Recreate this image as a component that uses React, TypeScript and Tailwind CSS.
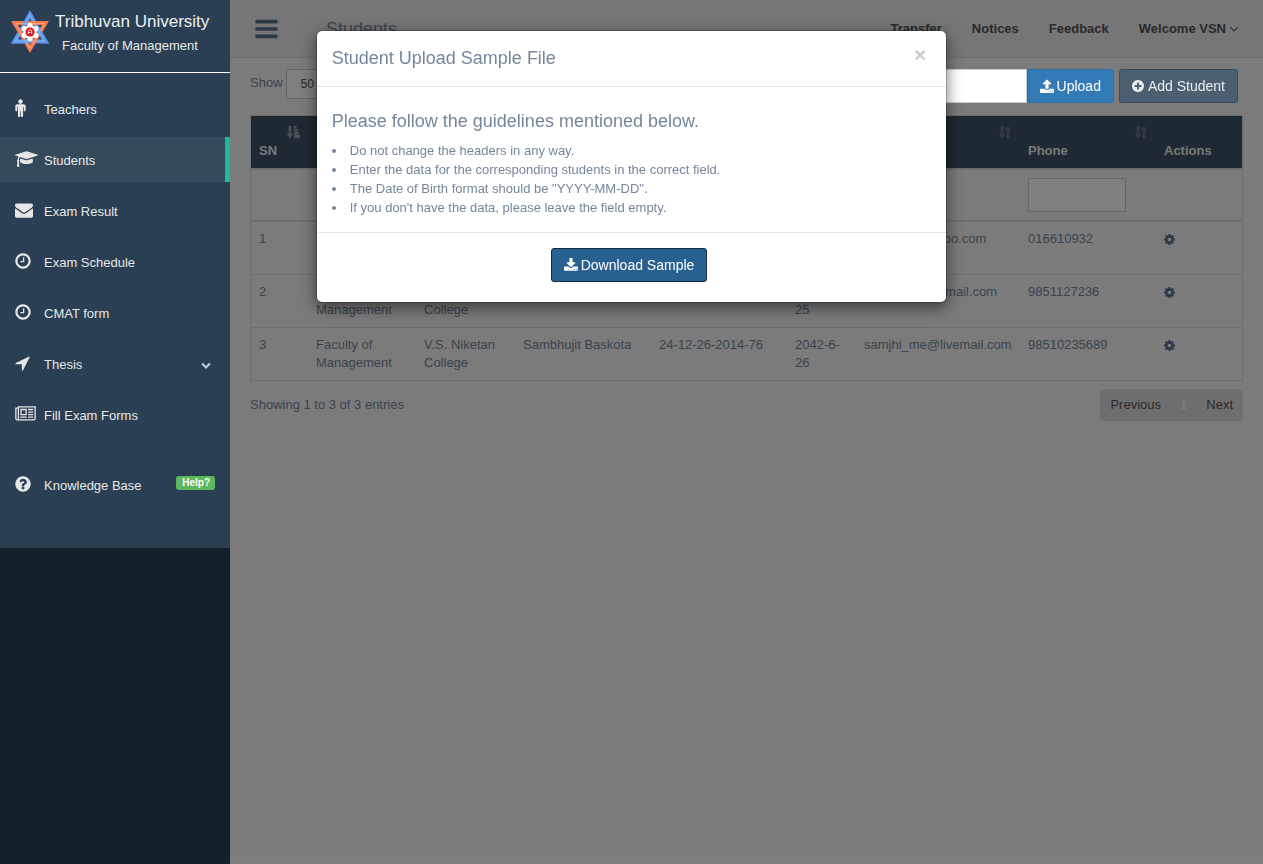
import React from 'react';

type IconProps = { path: string; viewBox?: string; className?: string };

function Icon({ path, viewBox = '0 0 1792 1792', className = '' }: IconProps) {
    return (
        <svg viewBox={viewBox} fill="currentColor" aria-hidden="true" className={className}>
            <path d={path} />
        </svg>
    );
}

const CIRCLE = 'q0 209-103 385.5t-279.5 279.5-385.5 103-385.5-103-279.5-279.5-103-385.5 103-385.5 279.5-279.5 385.5-103 385.5 103 279.5 279.5 103 385.5z';

const icons = {
    bars: 'M1664 1344v128q0 26-19 45t-45 19h-1408q-26 0-45-19t-19-45v-128q0-26 19-45t45-19h1408q26 0 45 19t19 45zm0-512v128q0 26-19 45t-45 19h-1408q-26 0-45-19t-19-45v-128q0-26 19-45t45-19h1408q26 0 45 19t19 45zm0-512v128q0 26-19 45t-45 19h-1408q-26 0-45-19t-19-45v-128q0-26 19-45t45-19h1408q26 0 45 19t19 45z',
    male: 'M1408 704v416q0 40-28 68t-68 28-68-28-28-68v-352h-64v912q0 46-33 79t-79 33-79-33-33-79v-464h-64v464q0 46-33 79t-79 33-79-33-33-79v-912h-64v352q0 40-28 68t-68 28-68-28-28-68v-416q0-80 56-136t136-56h640q80 0 136 56t56 136zm-288-448q0 93-65.5 158.5t-158.5 65.5-158.5-65.5-65.5-158.5 65.5-158.5 158.5-65.5 158.5 65.5 65.5 158.5z',
    cap: 'M1774 836l18 316q4 69-82 128t-235 93.5-323 34.5-323-34.5-235-93.5-82-128l18-316 574 181q22 7 48 7t48-7zm530-324q0 23-22 31l-1120 352q-4 1-10 1t-10-1l-652-206q-43 34-71 111.5t-34 178.5q63 36 63 109 0 69-58 107l58 433q2 14-8 25-9 11-24 11h-192q-15 0-24-11-10-11-8-25l58-433q-58-38-58-107 0-73 65-111 11-207 98-330l-333-104q-22-8-22-31t22-31l1120-352q4-1 10-1t10 1l1120 352q22 8 22 31z',
    envelope: 'M1792 710v794q0 66-47 113t-113 47h-1472q-66 0-113-47t-47-113v-794q44 49 101 87 362 246 497 345 57 42 92.5 65.5t94.5 48 110 24.5h2q51 0 110-24.5t94.5-48 92.5-65.5q170-123 498-345 57-39 100-87zm0-294q0 79-49 151t-122 123q-376 261-468 325-10 7-42.5 31t-54 38.5-52 32.5-57.5 27-50 9h-2q-23 0-50-9t-57.5-27-52-32.5-54-38.5-42.5-31q-91-64-262-182.5t-205-142.5q-62-42-117-115.5t-55-136.5q0-78 41.5-130t118.5-52h1472q65 0 112.5 47t47.5 113z',
    clock: 'M1024 544v448q0 14-9 23t-23 9h-320q-14 0-23-9t-9-23v-64q0-14 9-23t23-9h224v-352q0-14 9-23t23-9h64q14 0 23 9t9 23zm416 352q0-148-73-273t-198-198-273-73-273 73-198 198-73 273 73 273 198 198 273 73 273-73 198-198 73-273zm224 0' + CIRCLE,
    arrow: 'M1593 349l-640 1280q-17 35-57 35-5 0-15-2-22-5-35.5-22.5t-13.5-39.5v-576h-576q-22 0-39.5-13.5t-22.5-35.5 4-42 29-30l1280-640q13-7 29-7 27 0 45 19 15 14 18.5 34.5t-6.5 39.5z',
    newspaper: 'M1024 512h-384v384h384v-384zm128 640v128h-640v-128h640zm0-768v640h-640v-640h640zm640 768v128h-512v-128h512zm0-256v128h-512v-128h512zm0-256v128h-512v-128h512zm0-256v128h-512v-128h512zm-1536 960v-960h-128v960q0 26 19 45t45 19 45-19 19-45zm1664 0v-1088h-1536v1088q0 33-11 64h1483q26 0 45-19t19-45zm128-1216v1216q0 80-56 136t-136 56h-1664q-80 0-136-56t-56-136v-1088h256v-128h1792z',
    question: 'M1024 1376v-192q0-14-9-23t-23-9h-192q-14 0-23 9t-9 23v192q0 14 9 23t23 9h192q14 0 23-9t9-23zm256-672q0-88-55.5-163t-138.5-116-170-41q-243 0-371 213-15 24 8 42l132 100q7 6 19 6 16 0 25-12 53-68 86-92 34-24 86-24 48 0 85.5 26t37.5 59q0 38-20 61t-68 45q-63 28-115.5 86.5t-52.5 125.5v36q0 14 9 23t23 9h192q14 0 23-9t9-23q0-19 21.5-49.5t54.5-49.5q32-18 49-28.5t46-35 44.5-48 28-60.5 12.5-81zm384 192' + CIRCLE,
    plus: 'M1344 960v-128q0-26-19-45t-45-19h-256v-256q0-26-19-45t-45-19h-128q-26 0-45 19t-19 45v256h-256q-26 0-45 19t-19 45v128q0 26 19 45t45 19h256v256q0 26 19 45t45 19h128q26 0 45-19t19-45v-256h256q26 0 45-19t19-45zm320-64' + CIRCLE,
    cog: 'M1152 896q0-106-75-181t-181-75-181 75-75 181 75 181 181 75 181-75 75-181zm512-109v222q0 12-8 23t-20 13l-185 28q-19 54-39 91 35 50 107 138 10 12 10 25t-9 23q-27 37-99 108t-94 71q-12 0-26-9l-138-108q-44 23-91 38-16 136-29 186-7 28-36 28h-222q-14 0-24.5-8.5t-11.5-21.5l-28-184q-49-16-90-37l-141 107q-10 9-25 9-14 0-25-11-126-114-165-168-7-10-7-23 0-12 8-23 15-21 51-66.5t54-70.5q-27-50-41-99l-183-27q-13-2-21-12.5t-8-23.5v-222q0-12 8-23t19-13l186-28q14-46 39-92-40-57-107-138-10-12-10-24 0-10 9-23 26-36 98.5-107.5t94.5-71.5q13 0 26 10l138 107q44-23 91-38 16-136 29-186 7-28 36-28h222q14 0 24.5 8.5t11.5 21.5l28 184q49 16 90 37l142-107q9-9 24-9 13 0 25 10 129 119 165 170 7 8 7 22 0 12-8 23-15 21-51 66.5t-54 70.5q26 50 41 98l183 28q13 2 21 12.5t8 23.5z',
    upload: 'M1344 1472q0-26-19-45t-45-19-45 19-19 45 19 45 45 19 45-19 19-45zm256 0q0-26-19-45t-45-19-45 19-19 45 19 45 45 19 45-19 19-45zm128-224v320q0 40-28 68t-68 28h-1472q-40 0-68-28t-28-68v-320q0-40 28-68t68-28h427q21 56 70.5 92t110.5 36h256q61 0 110.5-36t70.5-92h427q40 0 68 28t28 68zm-325-648q-17 40-59 40h-256v448q0 26-19 45t-45 19h-256q-26 0-45-19t-19-45v-448h-256q-42 0-59-40-17-39 14-69l448-448q18-19 45-19t45 19l448 448q31 30 14 69z',
    download: 'M1344 1344q0-26-19-45t-45-19-45 19-19 45 19 45 45 19 45-19 19-45zm256 0q0-26-19-45t-45-19-45 19-19 45 19 45 45 19 45-19 19-45zm128-224v320q0 40-28 68t-68 28h-1472q-40 0-68-28t-28-68v-320q0-40 28-68t68-28h465l135 136q58 56 136 56t136-56l136-136h464q40 0 68 28t28 68zm-325-569q17 41-14 70l-448 448q-18 19-45 19t-45-19l-448-448q-31-29-14-70 17-39 59-39h256v-448q0-26 19-45t45-19h256q26 0 45 19t19 45v448h256q42 0 59 39z',
    chevronDown: 'M1683 808l-742 741q-19 19-45 19t-45-19l-742-741q-19-19-19-45.5t19-45.5l166-165q19-19 45-19t45 19l531 531 531-531q19-19 45-19t45 19l166 165q19 19 19 45.5t-19 45.5z',
    angleDown: 'M1395 736q0 13-10 23l-466 466q-10 10-23 10t-23-10l-466-466q-10-10-10-23t10-23l50-50q10-10 23-10t23 10l393 393 393-393q10-10 23-10t23 10l50 50q10 10 10 23z',
    sort: 'M3 1h3v9h2.500l-4 5l-4-5h2.500zM10 15v-9h-2.500l4-5l4 5h-2.500v9z',
    sortAsc: 'M3 1h3v9h2.500l-4 5l-4-5h2.500zM9 1h3v3h-3zM9 4.500h4.500v3h-4.500zM9 8h5.500v3h-5.500zM9 11.500h7v3.500h-7z',
};

const menu = [
    { label: 'Teachers', icon: icons.male, viewBox: '384 0 1024 1792', size: 'w-[11px]' },
    { label: 'Students', icon: icons.cap, viewBox: '0 0 2304 1792', size: 'w-[23px]', active: true },
    { label: 'Exam Result', icon: icons.envelope, viewBox: '0 0 1792 1792', size: 'w-[18px]' },
    { label: 'Exam Schedule', icon: icons.clock, viewBox: '128 0 1536 1792', size: 'w-4' },
    { label: 'CMAT form', icon: icons.clock, viewBox: '128 0 1536 1792', size: 'w-4' },
    { label: 'Thesis', icon: icons.arrow, viewBox: '192 0 1408 1792', size: 'w-[15px]', open: true },
    { label: 'Fill Exam Forms', icon: icons.newspaper, viewBox: '0 0 2048 1792', size: 'w-[21px]' },
];

const columns = [
    { name: 'sn', label: 'SN', width: 'w-[57px]', icon: icons.sortAsc },
    { name: 'faculty', width: 'w-[108px]', icon: icons.sort },
    { name: 'college', width: 'w-[99px]', icon: icons.sort },
    { name: 'student', width: 'w-[136px]', icon: icons.sort },
    { name: 'registration', width: 'w-[136px]', icon: icons.sort },
    { name: 'birth date', width: 'w-[69px]', icon: icons.sort },
    { name: 'email', width: 'w-[164px]', icon: icons.sort },
    { name: 'phone', label: 'Phone', width: 'w-[136px]', icon: icons.sort },
    { name: 'actions', label: 'Actions', width: '' },
];

const students = [
    ['1', 'Faculty of Management', 'V.S. Niketan College', 'Sambhujit Baskota', '24-12-26-2014-74', '2042-6-24', 'vsndept@yahoo.com', '016610932'],
    ['2', 'Faculty of Management', 'V.S. Niketan College', 'Sambhujit Baskota', '24-12-26-2014-75', '2042-6-25', 'samjhi.b@livemail.com', '9851127236'],
    ['3', 'Faculty of Management', 'V.S. Niketan College', 'Sambhujit Baskota', '24-12-26-2014-76', '2042-6-26', 'samjhi_me@livemail.com', '98510235689'],
];

const guidelines = [
    'Do not change the headers in any way.',
    'Enter the data for the corresponding students in the correct field.',
    'The Date of Birth format should be "YYYY-MM-DD".',
    "If you don't have the data, please leave the field empty.",
];

function Logo() {
    return (
        <svg viewBox="0 0 38 44" className="h-[44px] w-[38px] shrink-0" aria-hidden="true">
            <g fill="none" strokeWidth="4">
                <path d="M19 4.500L34.500 31.500H3.500Z" stroke="#5a96f0" />
                <path d="M19 39L3.500 13H34.500Z" stroke="#f5794a" />
                <path d="M13 15L19 4.500L22 10M7.500 24.500L3.500 31.500H16M28 20.500L34.500 31.500H30" stroke="#5a96f0" />
            </g>
            <path d="M19 5L33.500 31H4.500Z M19 38.500L4.500 13.500H33.500Z" fill="none" stroke="#fff" strokeOpacity="0.4" strokeWidth="0.7" />
            <g fill="#fff">
                <circle cx="19" cy="22" r="7" />
                <circle cx="19" cy="15.500" r="2.800" />
                <circle cx="19" cy="28.500" r="2.800" />
                <circle cx="13.300" cy="18.700" r="2.800" />
                <circle cx="24.700" cy="18.700" r="2.800" />
                <circle cx="13.300" cy="25.300" r="2.800" />
                <circle cx="24.700" cy="25.300" r="2.800" />
            </g>
            <circle cx="19" cy="22" r="4.500" fill="#e3121b" />
            <path d="M17.300 24V21.500a1.700 1.700 0 0 1 3.400 0V24M17.300 22.500h2" fill="none" stroke="#fff" strokeWidth="0.900" />
        </svg>
    );
}

function Sidebar() {
    return (
        <aside className="relative z-30 w-[230px] shrink-0 self-start bg-[#2a3f54] pb-[41px] text-[13px] text-[#e7e7e7]">
            <div className="flex h-[73px] items-start gap-[6px] border-b border-white pl-[11px] pt-[10px]">
                <Logo />
                <div>
                    <div className="text-[17px] leading-6 text-[#ecf0f1]">Tribhuvan University</div>
                    <div className="pl-[7px] leading-6">Faculty of Management</div>
                </div>
            </div>
            <nav className="flex flex-col gap-[6px] pt-[13px]">
                {menu.map((item) => (
                    <a
                        key={item.label}
                        href="#"
                        className={`flex h-[45px] items-center pl-[15px] pt-[2px] ${item.active ? 'border-r-[5px] border-[#1abb9c] bg-[#35495d]' : ''}`}
                    >
                        <span className="w-[29px] pb-[3px]">
                            <Icon path={item.icon} viewBox={item.viewBox} className={`h-[18px] ${item.size}`} />
                        </span>
                        {item.label}
                        {item.open && <Icon path={icons.chevronDown} className="ml-auto mr-[19px] h-[10px] w-[10px] text-[#c4cfda]" />}
                    </a>
                ))}
                <a href="#" className="mt-[19px] flex h-[45px] items-center px-[15px] pt-[2px]">
                    <span className="w-[29px] pb-[3px]">
                        <Icon path={icons.question} viewBox="128 0 1536 1792" className="h-[18px] w-4" />
                    </span>
                    Knowledge Base
                    <span className="mb-[6px] ml-auto rounded-[3px] bg-[#5cb85c] pl-[6px] pr-[5px] text-[10px] font-bold leading-[14px] text-white">Help?</span>
                </a>
            </nav>
        </aside>
    );
}

function StudentsTable() {
    return (
        <table className="mt-3 w-full table-fixed border-separate border-spacing-0 border border-[#ddd]">
            <thead>
                <tr>
                    {columns.map((col) => (
                        <th
                            key={col.name}
                            aria-label={col.name}
                            className={`h-[54px] border-b-2 border-[#ddd] bg-[#3f5367] px-2 pb-2 text-left align-bottom font-bold leading-[18px] text-[#ecf0f1] ${col.width}`}
                        >
                            {col.icon && (
                                <Icon
                                    path={col.icon}
                                    viewBox="0 0 16 16"
                                    className={`mb-[3px] ml-auto h-[14px] w-[14px] ${col.name === 'sn' ? 'text-[#94a0ac]' : 'text-[#66778a]'}`}
                                />
                            )}
                            {col.label ?? <>&nbsp;</>}
                        </th>
                    ))}
                </tr>
                <tr>
                    {columns.map((col) => (
                        <td key={col.name} className="h-[52px] border-b-2 border-[#ddd] px-2 py-2">
                            {col.name === 'phone' && <input type="text" aria-label="Filter by phone" className="block h-[34px] w-[98px] border border-[#ccc] bg-white px-3" />}
                        </td>
                    ))}
                </tr>
            </thead>
            <tbody>
                {students.map((row, i) => (
                    <tr key={row[0]} className="align-top leading-[18px]">
                        {row.map((cell, j) => (
                            <td key={j} className={`h-[52px] p-2 ${i < students.length - 1 ? 'border-b border-[#ddd]' : ''}`}>{cell}</td>
                        ))}
                        <td className={`p-2 ${i < students.length - 1 ? 'border-b border-[#ddd]' : ''}`}>
                            <button type="button" aria-label="Student actions" className="block pt-1 text-[#5a738e]">
                                <Icon path={icons.cog} viewBox="128 128 1536 1536" className="h-[11px] w-[11px]" />
                            </button>
                        </td>
                    </tr>
                ))}
            </tbody>
        </table>
    );
}

function UploadModal() {
    return (
        <div className="fixed inset-0 z-40">
            <div role="dialog" aria-labelledby="upload-title" className="mx-auto mt-[30px] w-1/2 rounded-md border border-black/20 bg-white bg-clip-padding shadow-[0_5px_15px_rgba(0,0,0,0.5)]">
                <div className="flex items-start justify-between border-b border-[#e5e5e5] p-[15px]">
                    <h4 id="upload-title" className="text-[18px] leading-[25px]">Student Upload Sample File</h4>
                    <button type="button" aria-label="Close" className="mr-[5px] text-[21px] font-bold leading-[18px] text-[#ccc]">&times;</button>
                </div>
                <div className="px-[15px] pb-[15px] pt-6">
                    <h4 className="mb-[10px] text-[18px] leading-5">Please follow the guidelines mentioned below.</h4>
                    <ul className="leading-[19px]">
                        {guidelines.map((text) => (
                            <li key={text} className="flex items-center gap-[14px] before:h-1 before:w-1 before:shrink-0 before:rounded-full before:bg-[#73879c]">
                                {text}
                            </li>
                        ))}
                    </ul>
                </div>
                <div className="flex justify-center border-t border-[#e5e5e5] pb-5 pt-[15px]">
                    <button type="button" className="mr-[5px] flex h-[34px] items-center gap-[3px] rounded-[3px] border border-[#122b40] bg-[#286090] px-3 text-[14px] text-white">
                        <Icon path={icons.download} viewBox="64 0 1664 1792" className="h-[15px] w-[14px]" />
                        Download Sample
                    </button>
                </div>
            </div>
        </div>
    );
}

export default function App() {
    return (
        <div className="flex min-h-screen bg-[#2a3f54] font-['Liberation_Sans',Arial,sans-serif] text-[13px] leading-[18px] text-[#73879c]">
            <Sidebar />

            <div className="flex min-w-0 flex-1 flex-col bg-[#f7f7f7]">
                <header className="flex h-[58px] items-center border-b border-[#d9dee4] bg-[#ededed] px-[25px]">
                    <button type="button" aria-label="Toggle menu" className="text-[#5a738e]">
                        <Icon path={icons.bars} viewBox="128 0 1536 1792" className="h-[26px] w-[23px]" />
                    </button>
                    <h1 className="ml-12 text-[18px]">Students</h1>
                    <nav className="ml-auto flex gap-[30px] font-bold text-[#515356]">
                        <a href="#">Transfer</a>
                        <a href="#">Notices</a>
                        <a href="#">Feedback</a>
                        <a href="#" className="flex items-center gap-1">
                            Welcome VSN
                            <Icon path={icons.angleDown} viewBox="384 384 1024 1024" className="h-2 w-2" />
                        </a>
                    </nav>
                </header>

                <main className="px-5 pt-[11px]">
                    <div className="flex items-start justify-between">
                        <label className="flex items-start gap-[3px]">
                            <span className="pt-[5px]">Show</span>
                            <select defaultValue="50" className="h-[30px] w-[75px] appearance-none border border-[#ccc] bg-white pl-[14px] text-[12px] text-[#555]">
                                <option>10</option>
                                <option>25</option>
                                <option>50</option>
                                <option>100</option>
                            </select>
                            <span className="pt-[5px]">entries</span>
                        </label>
                        {/* stays above the backdrop, below the dialog */}
                        <div className="relative z-30 mr-[5px] flex text-[14px] text-white">
                            <input type="text" aria-label="Upload file" className="h-[34px] w-[196px] border border-[#ccc] bg-white px-3 text-[#555]" />
                            <button type="button" className="flex h-[34px] items-center gap-[3px] rounded-r-[3px] border border-[#2e6da4] bg-[#337ab7] px-3">
                                <Icon path={icons.upload} viewBox="64 0 1664 1792" className="h-[15px] w-[14px]" />
                                Upload
                            </button>
                            <button type="button" className="ml-[5px] flex h-[34px] items-center gap-1 rounded-[3px] border border-[#364b5f] bg-[#4b5f71] px-3 text-[#e9edef]">
                                <Icon path={icons.plus} viewBox="128 0 1536 1792" className="h-[14px] w-3" />
                                Add Student
                            </button>
                        </div>
                    </div>

                    <StudentsTable />

                    <div className="mt-2 flex items-start justify-between">
                        <p className="pt-[7px]">Showing 1 to 3 of 3 entries</p>
                        <div className="flex h-8 items-center rounded bg-[#ddd] px-[10px] text-[#555]">
                            <button type="button">Previous</button>
                            <button type="button" className="mx-[19px] text-white">1</button>
                            <button type="button">Next</button>
                        </div>
                    </div>
                </main>

                <footer className="mt-auto h-[7px] bg-white" />
            </div>

            <div className="fixed inset-0 z-20 bg-black/50" />
            <UploadModal />
        </div>
    );
}
